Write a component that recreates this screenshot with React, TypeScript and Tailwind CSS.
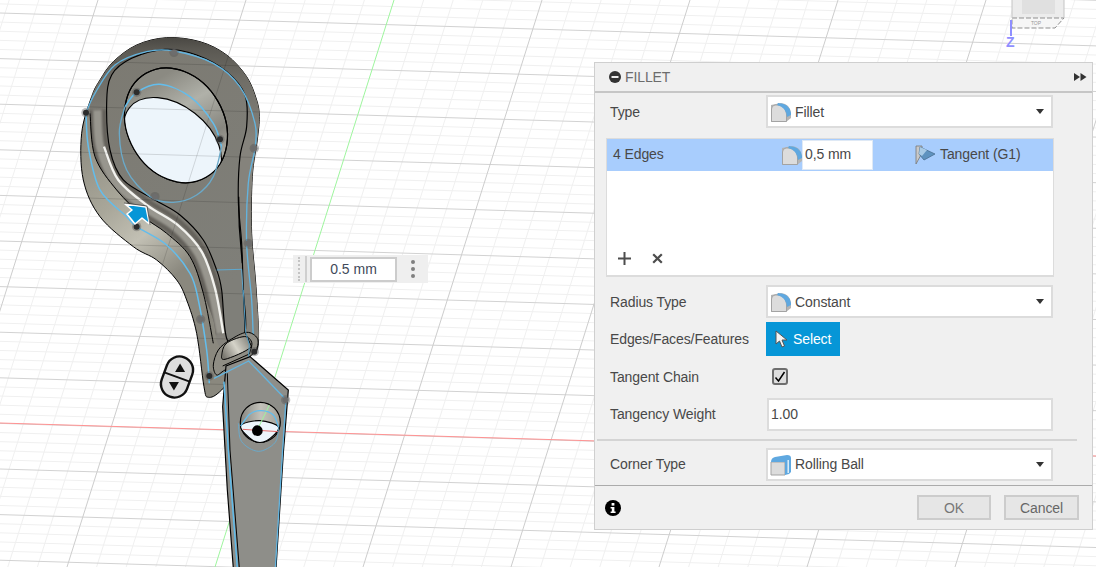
import React from "react";

type P = [number, number];

function smooth(pts: P[], closed = true): string {
  const n = pts.length;
  const at = (i: number): P => (closed ? pts[(i + n) % n] : pts[Math.max(0, Math.min(n - 1, i))]);
  let d = `M${pts[0][0]} ${pts[0][1]}`;
  const last = closed ? n : n - 1;
  for (let i = 0; i < last; i++) {
    const p0 = at(i - 1);
    const p1 = at(i);
    const p2 = at(i + 1);
    const p3 = at(i + 2);
    const c1: P = [p1[0] + (p2[0] - p0[0]) / 6, p1[1] + (p2[1] - p0[1]) / 6];
    const c2: P = [p2[0] - (p3[0] - p1[0]) / 6, p2[1] - (p3[1] - p1[1]) / 6];
    d += `C${c1[0].toFixed(1)} ${c1[1].toFixed(1)} ${c2[0].toFixed(1)} ${c2[1].toFixed(1)} ${p2[0]} ${p2[1]}`;
  }
  return d + (closed ? "Z" : "");
}

const silhouette: P[] = [
  [500, 113], [600, 125], [680, 165], [740, 230], [770, 300], [778, 350], [772, 420], [757, 530], [755, 700], [768, 860],
  [775, 1030], [750, 1070], [665, 1170], [625, 1192], [612, 1160], [590, 1000], [560, 900], [530, 840], [470, 780],
  [400, 740], [300, 650], [250, 540], [245, 400], [275, 290], [300, 240], [340, 185], [410, 135],
];
const body: P[] = [
  [500, 113], [600, 125], [680, 165], [740, 230], [770, 300], [778, 350], [772, 420], [757, 530], [755, 700], [768, 860],
  [775, 1030], [735, 1040], [660, 1040], [640, 960], [610, 880], [570, 770], [500, 700], [430, 650], [350, 570],
  [285, 470], [270, 340], [275, 290], [300, 240], [340, 185], [410, 135],
];
const face: P[] = [
  [495, 148], [590, 165], [680, 215], [735, 285], [740, 380], [720, 470], [715, 600], [725, 730], [730, 870],
  [735, 997], [682, 1020], [665, 870], [650, 810], [610, 720], [540, 645], [465, 600], [370, 540], [330, 450],
  [320, 310], [335, 225], [395, 175],
];
const bandLine: P[] = [
  [292, 330], [300, 440], [345, 545], [435, 622], [525, 680], [595, 760], [635, 870], [662, 1000],
];
const highlight: P[] = [
  [312, 440], [355, 540], [443, 617], [533, 675], [605, 755], [645, 865], [670, 1000],
];

const gridH = Array.from({ length: 72 }, (_, i) => {
  const k = i - 5;
  return { y: 22 + 9.12 * k, major: ((k % 5) + 5) % 5 === 0 };
});
const gridV = Array.from({ length: 50 }, (_, i) => {
  const k = i - 14;
  return { x: 394 + 29.6 * k, major: ((k % 5) + 5) % 5 === 0, axis: k === 0 };
});

function Dot({ x, y, light }: { x: number; y: number; light?: boolean }) {
  return (
    <g>
      <circle cx={x} cy={y} r={14} fill="#555" opacity={0.4} />
      <circle cx={x} cy={y} r={9} fill={light ? "#6d6d6d" : "#2c2c2c"} />
    </g>
  );
}

function Viewport() {
  const majorLines = (
    <>
      {gridH.filter((l) => l.major).map((l, i) => (
        <line key={i} x1={0} y1={l.y - 9} x2={1096} y2={l.y + 23.9} stroke="#000" strokeWidth={1} opacity={0.13} />
      ))}
      {gridV.filter((l) => l.major).map((l, i) => (
        <line key={i} x1={l.x} y1={0} x2={l.x - 179} y2={567} stroke="#000" strokeWidth={1} opacity={0.13} />
      ))}
    </>
  );
  return (
    <svg className="absolute inset-0" width={1096} height={567} viewBox="0 0 1096 567">
      <defs>
        <linearGradient id="flange" x1="240" y1="400" x2="560" y2="800" gradientUnits="userSpaceOnUse">
          <stop offset="0" stopColor="#8d8b80" />
          <stop offset="0.45" stopColor="#a9a79a" />
          <stop offset="0.7" stopColor="#c2c0b4" />
          <stop offset="1" stopColor="#8a887e" />
        </linearGradient>
        <linearGradient id="bodyG" x1="0" y1="113" x2="0" y2="420" gradientUnits="userSpaceOnUse">
          <stop offset="0" stopColor="#4a4843" />
          <stop offset="0.12" stopColor="#5b5953" />
          <stop offset="0.4" stopColor="#6f6d66" />
          <stop offset="1" stopColor="#85837c" />
        </linearGradient>
        <linearGradient id="faceG" x1="300" y1="150" x2="760" y2="800" gradientUnits="userSpaceOnUse">
          <stop offset="0" stopColor="#7c7a72" />
          <stop offset="1" stopColor="#7f7f79" />
        </linearGradient>
        <linearGradient id="wallG" x1="380" y1="0" x2="690" y2="0" gradientUnits="userSpaceOnUse">
          <stop offset="0" stopColor="#8b8a82" />
          <stop offset="0.35" stopColor="#b0b1a9" />
          <stop offset="0.72" stopColor="#87867f" />
          <stop offset="1" stopColor="#b3b2a8" />
        </linearGradient>
        <linearGradient id="wall2" x1="275" y1="0" x2="390" y2="0" gradientUnits="userSpaceOnUse">
          <stop offset="0" stopColor="#8a8a84" />
          <stop offset="0.5" stopColor="#c3c2ba" />
          <stop offset="1" stopColor="#a3a29a" />
        </linearGradient>
        <linearGradient id="slab" x1="220" y1="200" x2="300" y2="150" gradientUnits="userSpaceOnUse">
          <stop offset="0" stopColor="#77756d" />
          <stop offset="0.5" stopColor="#d5d3c9" />
          <stop offset="1" stopColor="#85837b" />
        </linearGradient>
        <clipPath id="partClip">
          <path d={smooth(silhouette)} transform="scale(0.3333)" />
        </clipPath>
        <clipPath id="bodyClip">
          <path d={smooth(body)} />
        </clipPath>
        <clipPath id="wallClip">
          <ellipse cx={528} cy={376} rx={180} ry={145} transform="rotate(60 528 376)" />
        </clipPath>
        <filter id="soft" x="-20%" y="-20%" width="140%" height="140%">
          <feGaussianBlur stdDeviation="3" />
        </filter>
        <filter id="softer" x="-20%" y="-20%" width="140%" height="140%">
          <feGaussianBlur stdDeviation="1.5" />
        </filter>
      </defs>

      {gridH.filter((l) => !l.major).map((l, i) => (
        <line key={i} x1={0} y1={l.y - 9} x2={1096} y2={l.y + 23.9} stroke="#f0f0f0" strokeWidth={1} />
      ))}
      {gridV.filter((l) => !l.major).map((l, i) => (
        <line key={i} x1={l.x} y1={0} x2={l.x - 179} y2={567} stroke="#f0f0f0" strokeWidth={1} />
      ))}
      {gridH.filter((l) => l.major).map((l, i) => (
        <line key={i} x1={0} y1={l.y - 9} x2={1096} y2={l.y + 23.9} stroke="#d2d2d2" strokeWidth={1} />
      ))}
      {gridV.filter((l) => l.major && !l.axis).map((l, i) => (
        <line key={i} x1={l.x} y1={0} x2={l.x - 179} y2={567} stroke="#cdcdcd" strokeWidth={1} />
      ))}
      <line x1={394} y1={0} x2={215} y2={567} stroke="#9ef59e" strokeWidth={1} />
      <line x1={0} y1={423} x2={1096} y2={456} stroke="#ff9393" strokeWidth={1} />

      {/* upper part */}
      <g transform="scale(0.3333)">
        <path d={smooth(silhouette)} fill="url(#flange)" stroke="#000" strokeWidth={3} />
        <path d={smooth(body)} fill="url(#bodyG)" />
        <g clipPath="url(#bodyClip)" fill="none">
          <path d={smooth(bandLine, false)} stroke="#63615a" strokeWidth={56} filter="url(#soft)" />
          <path d={smooth(bandLine, false)} stroke="#98968e" strokeWidth={26} filter="url(#soft)" />
          <path d={smooth(highlight, false)} stroke="#f2f2ee" strokeWidth={7} filter="url(#softer)" />
        </g>
        <path d={smooth(face)} fill="url(#faceG)" stroke="#000" strokeWidth={3.5} />
        <path
          d={smooth([[270, 340], [285, 470], [350, 570], [430, 650], [500, 700], [570, 770], [610, 880], [640, 1030]], false)}
          fill="none"
          stroke="#000"
          strokeWidth={3}
        />
        <ellipse cx={528} cy={376} rx={180} ry={145} transform="rotate(60 528 376)" fill="url(#wallG)" stroke="#000" strokeWidth={3.5} />
        <g clipPath="url(#wallClip)">
          <ellipse cx={518} cy={425} rx={165} ry={108} transform="rotate(38 518 425)" fill="#edf5fb" stroke="#000" strokeWidth={3.5} />
        </g>
        <ellipse cx={528} cy={376} rx={180} ry={145} transform="rotate(60 528 376)" fill="none" stroke="#000" strokeWidth={3.5} />
      </g>
      <g clipPath="url(#partClip)">{majorLines}</g>
      <g transform="scale(0.3333)" fill="none">
        <path
          d={smooth([[375, 320], [410, 277], [480, 253], [570, 290], [640, 370], [665, 440]], false)}
          stroke="#63bdec"
          strokeWidth={4.5}
        />
        <path
          d={smooth([[665, 440], [640, 530], [590, 585], [520, 607], [450, 590], [380, 510], [358, 400], [375, 320]], false)}
          stroke="#6aa9c9"
          strokeWidth={4}
        />
        <path
          d={smooth([[258, 338], [285, 280], [345, 195], [440, 155], [522, 153], [640, 190], [720, 260], [765, 370], [765, 445], [745, 550], [740, 730], [755, 900], [760, 1020]], false)}
          stroke="#63b4df"
          strokeWidth={4}
        />
        <path
          d={smooth([[258, 338], [265, 440], [300, 570], [380, 650], [410, 680], [500, 735], [570, 820], [595, 900], [620, 1050], [628, 1150]], false)}
          stroke="#63bdec"
          strokeWidth={4.5}
        />
        <path d="M650 810 L725 808 L730 890" stroke="#5fa9cf" strokeWidth={3} />
        <path d="M716 590 L718 680 L727 790" stroke="#000" strokeWidth={4} />
      </g>

      {/* lower part, zoom-4 space */}
      <g transform="translate(150 290) scale(0.3333)">
        <path d={smooth([[200, 255], [190, 225], [205, 180], [240, 150], [290, 127], [322, 145], [318, 180], [285, 210], [225, 240]])} fill="#8f8d84" stroke="#000" strokeWidth={3} />
        <path d={smooth([[232, 158], [288, 140], [302, 172], [225, 208], [216, 190]])} fill="url(#slab)" stroke="#000" strokeWidth={3} />
        <path d="M280 0 L285 127 L305 170 L298 192 L218 228" fill="none" stroke="#000" strokeWidth={3} />
        <path d="M280 0 L287 127 L298 165 L295 212" fill="none" stroke="#4f9cc4" strokeWidth={3} />
        <path d="M228 228 L300 200 L415 300 L400 490 L378 835 L250 835 L232 600 L218 350 Z" fill="#8e8e89" stroke="#000" strokeWidth={3.5} />
        <path d="M232 250 L240 480 L268 835" fill="none" stroke="#000" strokeWidth={3} />
        <path d="M192 265 L296 213 L407 328" fill="none" stroke="#63b4df" strokeWidth={4} />
        <path d="M222 275 L235 480 L262 835" fill="none" stroke="#5fbcec" strokeWidth={4.5} />
        <path d="M408 330 L398 480 L376 835" fill="none" stroke="#63b4df" strokeWidth={4} />
        <circle cx={331} cy={397} r={60} fill="url(#wall2)" stroke="#000" strokeWidth={3.5} />
        <path d={smooth([[272, 408], [330, 392], [386, 412], [350, 452], [310, 452]])} fill="#edf5fb" stroke="#000" strokeWidth={3.5} />
        <line x1={278} y1={418} x2={385} y2={425} stroke="#e56a6a" strokeWidth={3} />
        <line x1={358} y1={345} x2={322} y2={420} stroke="#9ef59e" strokeWidth={3} />
        <circle cx={322} cy={422} r={16} fill="#000" />
        <path d={smooth([[272, 408], [300, 372], [335, 362], [370, 375], [386, 412]], false)} fill="none" stroke="#63bdec" strokeWidth={4} />
        <path d={smooth([[265, 400], [275, 455], [325, 484], [375, 458], [386, 412]], false)} fill="none" stroke="#6aa9c9" strokeWidth={3} />
      </g>

      {/* vertices */}
      <g transform="scale(0.3333)">
        <Dot x={522} y={157} light />
        <Dot x={258} y={338} />
        <Dot x={410} y={277} />
        <Dot x={660} y={418} />
        <Dot x={763} y={445} light />
        <Dot x={465} y={590} light />
        <Dot x={410} y={680} />
        <Dot x={745} y={730} light />
        <Dot x={602} y={958} light />
        <Dot x={628} y={1128} />
        <Dot x={763} y={1055} />
        <Dot x={857} y={1200} light />
      </g>

      {/* blue arrow */}
      <path d="M125 204 L146 207 L149.5 224 L142 218 L135 224 L127 214 L132 210 Z" fill="#0696d7" stroke="#fff" strokeWidth={1.6} strokeLinejoin="round" />
      <path d="M124 203 L147 206 L150 225" fill="none" stroke="#222" strokeWidth={0.6} />

      {/* flip handle */}
      <g transform="translate(177 377) rotate(20)">
        <rect x={-13.5} y={-21} width={27} height={42} rx={13.5} fill="#dedede" stroke="#111" strokeWidth={2.4} />
        <line x1={-13.5} y1={0} x2={13.5} y2={0} stroke="#111" strokeWidth={2} />
        <path d="M-5 -5.5 L5 -5.5 L0 -14 Z" fill="#111" transform="rotate(-20 0 -9)" />
        <path d="M-5 5.5 L5 5.5 L0 14 Z" fill="#111" transform="rotate(-20 0 9)" />
      </g>

      {/* view cube */}
      <rect x={1012} y={0} width={52} height={18} fill="#ececec" />
      <rect x={1022} y={0} width={33} height={14} fill="#e0e0e0" />
      <path d="M1012 18 L1064 18 L1055 28 L1012 28 Z" fill="#f6f6f6" stroke="#8f8f8f" strokeWidth={1} strokeDasharray="5 2" />
      <line x1={1012} y1={0} x2={1012} y2={18} stroke="#c4c4c4" />
      <line x1={1064} y1={0} x2={1064} y2={18} stroke="#c4c4c4" />
      <text x={1036} y={25} fontSize={5} fill="#999" textAnchor="middle" fontFamily="Liberation Sans, sans-serif">TOP</text>
      <line x1={1011} y1={20} x2={1011} y2={36} stroke="#8f8fff" strokeWidth={2} />
      <text x={1006} y={47} fontSize={14} fontWeight="bold" fill="#8f8fff" fontFamily="Liberation Sans, sans-serif">Z</text>
    </svg>
  );
}

function FilletIcon({ variant = "fillet" }: { variant?: "fillet" | "ball" }) {
  if (variant === "ball") {
    return (
      <svg width={22} height={22} viewBox="0 0 22 22" className="shrink-0">
        <path d="M1 8 L15 8 L15 21 L1 21 Z" fill="#dcdcdc" stroke="#a3a3a3" />
        <path d="M1 8 Q1 4 5 3 L17 1 Q21 1 21 4 L21 18 L19 20 L15 21 L15 8 Z" fill="#5fa8e0" />
        <rect x={17.5} y={6} width={1.4} height={13} fill="#e8f3fb" />
      </svg>
    );
  }
  return (
    <svg width={22} height={22} viewBox="0 0 22 22" className="shrink-0">
      <path d="M1 4 L11 2 Q20 3 21 12 L21 17 L16 21 L1 21 Z" fill="#b5b5b5" />
      <path d="M1.5 8 Q1.5 4.5 5 4 L8 4 Q16 5 16.5 13 L16.5 20.5 L1.5 20.5 Z" fill="#dcdcdc" stroke="#a3a3a3" />
      <path d="M8 2 Q19 2 21 12 L21 14 L17 16 Q16 6 7 4 Z" fill="#5fa8e0" />
    </svg>
  );
}

function Dropdown({ icon, label, labelClassName }: { icon: React.ReactNode; label: string; labelClassName?: string }) {
  return (
    <div className="flex h-[33px] w-[287px] items-center border-2 border-[#dcdcdc] bg-white pl-[2px] pr-[7px]">
      {icon}
      <span className={`ml-[3px] flex-1 ${labelClassName ?? ""}`}>{label}</span>
      <svg width={8} height={5} viewBox="0 0 8 5">
        <path d="M0 0 H8 L4 5 Z" fill="#333" />
      </svg>
    </div>
  );
}

function Row({ label, className, labelClassName, children }: { label: string; className?: string; labelClassName?: string; children: React.ReactNode }) {
  return (
    <div className={`flex items-center pl-[15px] ${className ?? ""}`}>
      <span className={`w-[156px] shrink-0 ${labelClassName ?? ""}`}>{label}</span>
      {children}
    </div>
  );
}

function Panel() {
  return (
    <div className="absolute left-[594px] top-[62px] flex h-[468px] w-[499px] flex-col border border-[#cfcfcf] bg-[#f0f0f0] text-[14px] leading-none tracking-[-0.1px] text-[#484848] font-['Liberation_Sans',Arial,sans-serif]">
      <div className="flex h-[30px] shrink-0 items-center border-b-2 border-[#c6c6c6] pl-[14px] pr-[5px]">
        <svg width={12} height={12} viewBox="0 0 12 12">
          <circle cx={6} cy={6} r={6} fill="#333" />
          <rect x={2.5} y={5} width={7} height={2} fill="#eee" />
        </svg>
        <span className="ml-[4px] flex-1 text-[#6c6c6c]">FILLET</span>
        <svg width={13} height={8} viewBox="0 0 13 8">
          <path d="M0 0 L6 4 L0 8 Z M6.5 0 L12.5 4 L6.5 8 Z" fill="#333" />
        </svg>
      </div>

      <Row label="Type" className="mt-[2px]">
        <Dropdown icon={<FilletIcon />} label="Fillet" />
      </Row>

      <div className="ml-[11px] mt-[10px] flex h-[139px] w-[448px] flex-col justify-between border border-b-2 border-[#dcdcdc] bg-white pb-[10px]">
        <div className="flex h-[32px] items-center bg-[#a8cdfd] pl-[6px]">
          <span className="w-[168px] pb-[2px]">4 Edges</span>
          <FilletIcon />
          <div className="-ml-[1px] flex h-[30px] w-[71px] items-center border border-[#dfe9f5] bg-white pb-[2px] pl-[2px]">0,5 mm</div>
          <svg width={21} height={20} viewBox="0 0 21 20" className="ml-[42px]">
            <path d="M1 1 L7 1 L7 8 L1 19 Z" fill="#c9c9c9" stroke="#777" strokeWidth={0.8} />
            <path d="M5 2 L20 9 L9 15 L4 9 Z" fill="#5f93bf" stroke="#4a6f8f" strokeWidth={0.8} />
            <path d="M5 2 L12 5 L7 11 L4 9 Z" fill="#a9cbe6" />
          </svg>
          <span className="ml-[4px] pb-[2px]">Tangent (G1)</span>
        </div>
        <div className="flex items-center gap-[21px] pl-[11px]">
          <svg width={13} height={13} viewBox="0 0 13 13">
            <path d="M5.5 0 H7.5 V5.5 H13 V7.5 H7.5 V13 H5.5 V7.5 H0 V5.5 H5.5 Z" fill="#4d4d4d" />
          </svg>
          <svg width={11} height={11} viewBox="0 0 11 11">
            <path d="M1.2 1.2 L9.8 9.8 M9.8 1.2 L1.2 9.8" stroke="#4d4d4d" strokeWidth={2.2} />
          </svg>
        </div>
      </div>

      <Row label="Radius Type" className="mt-[8px]">
        <Dropdown icon={<FilletIcon />} label="Constant" />
      </Row>

      <Row label="Edges/Faces/Features" className="mt-[4px]">
        <div className="flex h-[34px] w-[74px] items-center bg-[#0696d7] pl-[9px] text-white">
          <svg width={13} height={18} viewBox="0 0 13 18" className="shrink-0">
            <path d="M1 1 L1 14 L4.5 11 L7 17 L9.5 16 L7 10 L12 10 Z" fill="#f4f4f4" stroke="#555" strokeWidth={1} />
          </svg>
          <span className="ml-[5px]">Select</span>
        </div>
      </Row>

      <Row label="Tangent Chain" className="mt-[12px]">
        <div className="ml-[6px] flex h-[17px] w-[16px] items-center justify-center rounded-[3px] border-2 border-[#6e6e6e] bg-[#dedede]">
          <svg width={12} height={12} viewBox="0 0 12 12">
            <path d="M1.5 6.5 L4.5 10 L10.5 1" fill="none" stroke="#000" strokeWidth={1.5} />
          </svg>
        </div>
      </Row>

      <Row label="Tangency Weight" className="mt-[13px]" labelClassName="pb-[1px]">
        <div className="ml-[1px] flex h-[33px] w-[286px] items-center border-2 border-[#dcdcdc] bg-white pl-[2px] pb-[1px]">1.00</div>
      </Row>

      <div className="ml-[2px] mt-[8px] h-[2px] w-[480px] shrink-0 bg-[#d4d4d4]" />

      <Row label="Corner Type" className="mt-[7px]" labelClassName="pb-[1px]">
        <Dropdown icon={<FilletIcon variant="ball" />} label="Rolling Ball" labelClassName="pb-[2px]" />
      </Row>

      <div className="mt-[4px] flex flex-1 items-center border-t border-[#ababab] pl-[10px] pr-[13px]">
        <svg width={16} height={16} viewBox="0 0 16 16">
          <circle cx={8} cy={8} r={8} fill="#000" />
          <rect x={6.6} y={3} width={2.8} height={2.6} fill="#fff" />
          <path d="M5.6 7 H9.4 V11.6 H10.6 V13 H5.6 V11.6 H6.8 V8.4 H5.6 Z" fill="#fff" />
        </svg>
        <div className="ml-auto flex gap-[13px]">
          <div className="flex h-[25px] w-[74px] items-center justify-center border-2 border-[#cccccc] bg-[#e6e6e6] text-[#777777]">OK</div>
          <div className="flex h-[25px] w-[75px] items-center justify-center border-2 border-[#cccccc] bg-[#e6e6e6] text-[#666666]">Cancel</div>
        </div>
      </div>
    </div>
  );
}

function DimensionChip() {
  return (
    <div className="absolute left-[293px] top-[255px] flex h-[28px] w-[135px] items-center bg-[#efefef] text-[14px] text-[#3f4a5a] font-['Liberation_Sans',Arial,sans-serif]">
      <div className="ml-[5px] h-[24px] w-[2px] border-l-2 border-dotted border-[#c4c4c4]" />
      <div className="ml-[5px] h-[26px] w-[2px] bg-[#cfcfcf]" />
      <div className="ml-[3px] flex h-[25px] w-[87px] items-center justify-center border-2 border-[#cccccc] bg-white">0.5 mm</div>
      <div className="ml-[14px] flex flex-col gap-[3px]">
        <div className="h-[4px] w-[4px] rounded-full bg-[#808080]" />
        <div className="h-[4px] w-[4px] rounded-full bg-[#808080]" />
        <div className="h-[4px] w-[4px] rounded-full bg-[#808080]" />
      </div>
    </div>
  );
}

export default function App() {
  return (
    <div className="relative h-[567px] w-[1096px] overflow-hidden bg-white">
      <Viewport />
      <DimensionChip />
      <Panel />
    </div>
  );
}
